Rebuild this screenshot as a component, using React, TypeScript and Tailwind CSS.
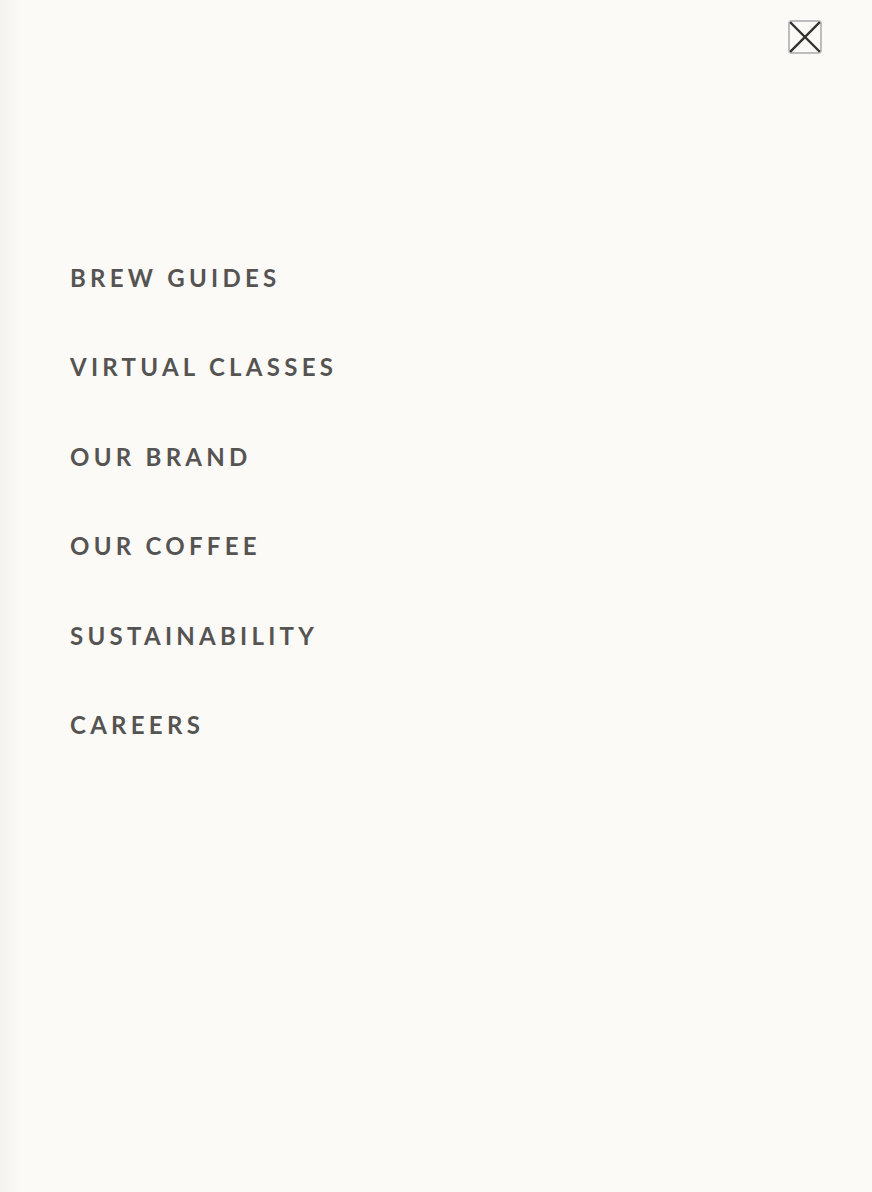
import React from "react";

const items = ["BREW GUIDES", "VIRTUAL CLASSES", "OUR BRAND", "OUR COFFEE", "SUSTAINABILITY", "CAREERS"];

export default function App() {
  return (
    <div className="relative w-[872px] h-[1192px] overflow-hidden bg-[#fbfaf7]" style={{ fontFamily: "Lato, 'Noto Sans', sans-serif" }}>
      <div className="absolute left-0 top-0 h-full w-[20px] bg-gradient-to-r from-[#f4f3f0] to-[#fbfaf7]" />
      <button className="absolute left-[788px] top-[20px] w-[34px] h-[34px] p-0">
        <div className="absolute inset-0 rounded-[4px] border-[2px] border-[#bdbdbd]" />
        <svg width="34" height="34" viewBox="0 0 34 34" className="absolute left-0 top-0">
          <path d="M3 3 L31 31 M31 3 L3 31" stroke="#333333" strokeWidth="2.4" strokeLinecap="square" />
        </svg>
      </button>
      <nav className="relative pt-[233px] pl-[70px]">
        <ul className="flex flex-col">
          {items.map((t) => (
            <li key={t} className="h-[89.5px] flex items-center">
              <a className="text-[24px] leading-none font-bold tracking-[0.178em] text-[#555452]">{t}</a>
            </li>
          ))}
        </ul>
      </nav>
    </div>
  );
}
